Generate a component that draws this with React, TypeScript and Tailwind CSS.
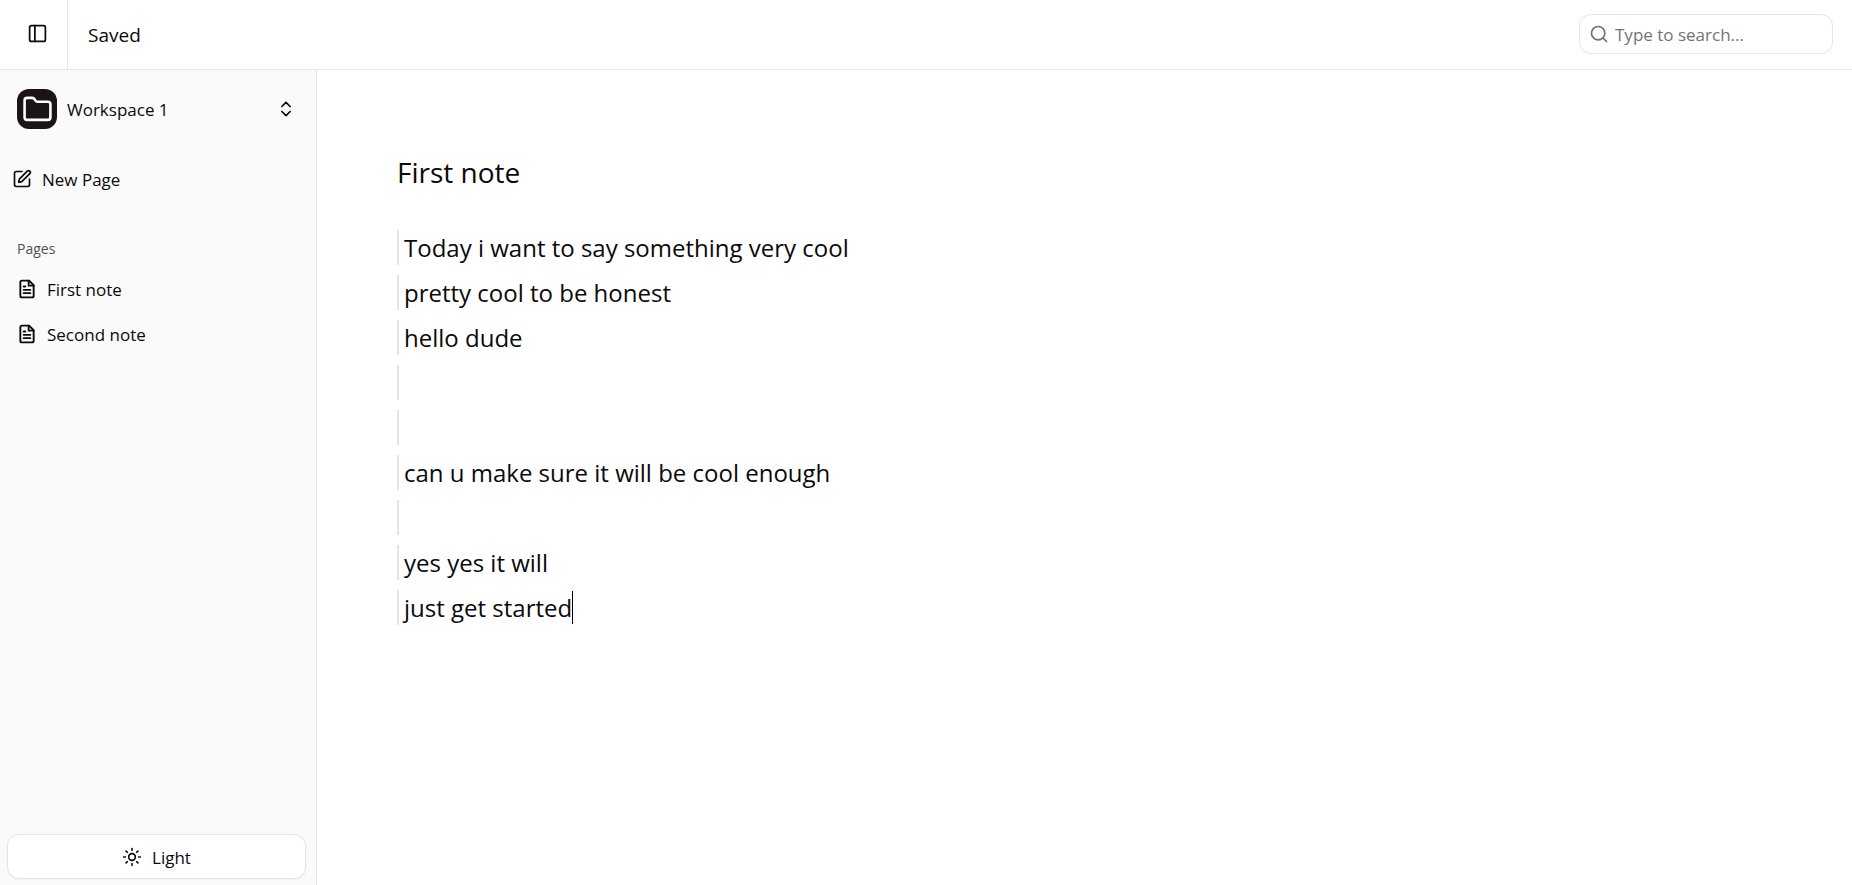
import { useState } from "react";
import { ChevronsUpDown, Folder, PanelLeft, Search, SquarePen, Sun } from "lucide-react";

const pages = ["First note", "Second note"];

const initialLines = [
  "Today i want to say something very cool",
  "pretty cool to be honest",
  "hello dude",
  "",
  "",
  "can u make sure it will be cool enough",
  "",
  "yes yes it will",
  "just get started",
];

function PageIcon() {
  return (
    <svg
      aria-hidden
      viewBox="0 0 24 24"
      fill="none"
      stroke="currentColor"
      strokeWidth="2.25"
      strokeLinecap="round"
      strokeLinejoin="round"
      className="size-5 shrink-0"
    >
      <path d="M14.5 2H6a2 2 0 0 0-2 2v16a2 2 0 0 0 2 2h12a2 2 0 0 0 2-2V7.5L14.5 2z" />
      <path d="M14 2v6h6" />
      <path d="M16 13H8" />
      <path d="M16 17H8" />
      <path d="M10 9H8" />
    </svg>
  );
}

function Header({ onToggle }: { onToggle: () => void }) {
  return (
    <header className="flex h-[70px] shrink-0 items-center border-b border-[#e4e4e4] bg-white">
      <div className="flex h-full w-[68px] items-center justify-center border-r border-[#e4e4e4]">
        <button type="button" aria-label="Toggle sidebar" onClick={onToggle} className="mb-0.5 ml-2">
          <PanelLeft size={21} />
        </button>
      </div>
      <p className="ml-5 pt-0.5 text-[19px]">Saved</p>
      <label className="mr-[19px] mb-[2px] ml-auto flex h-10 w-[254px] items-center gap-1.5 rounded-xl border border-[#e4e4e4] px-[9px]">
        <Search size={20} className="shrink-0 text-[#737373]" />
        <input
          type="text"
          aria-label="Search"
          placeholder="Type to search..."
          className="w-full min-w-0 bg-transparent pt-0.5 text-[17px] outline-none placeholder:text-[#737373]"
        />
      </label>
    </header>
  );
}

function Sidebar() {
  return (
    <aside className="flex w-[317px] shrink-0 flex-col border-r border-[#e4e4e4] bg-[#fafafa]">
      <button type="button" className="mt-[19px] flex h-10 items-center pr-5 pl-[17px] text-left">
        <span className="flex size-10 items-center justify-center rounded-xl bg-[#1c1414] text-white">
          <Folder size={31} />
        </span>
        <span className="ml-2.5 pt-0.5 text-[17px]">Workspace 1</span>
        <ChevronsUpDown size={20} className="ml-auto" />
      </button>

      <button type="button" className="mt-9 flex h-7 items-center gap-2.5 px-3 text-[17px]">
        <SquarePen size={20} />
        <span className="pt-0.5">New Page</span>
      </button>

      <h2 className="mt-[46px] ml-[17px] text-sm leading-5 text-[#525252]">Pages</h2>
      <nav className="mt-[7px] flex flex-col">
        {pages.map((page) => (
          <a key={page} href="#" className="flex h-[45px] items-center gap-2.5 px-[17px] text-[17px]">
            <PageIcon />
            <span className="pt-0.5">{page}</span>
          </a>
        ))}
      </nav>

      <button
        type="button"
        className="mx-[7px] mt-auto mb-[6px] flex h-[45px] w-[299px] items-center justify-center gap-2.5 rounded-xl border border-[#e4e4e4] bg-white text-[17px] shadow-xs"
      >
        <Sun size={20} />
        <span className="pt-0.5">Light</span>
      </button>
    </aside>
  );
}

export default function App() {
  const [open, setOpen] = useState(true);

  return (
    <div className="flex h-screen flex-col bg-white font-['Segoe_UI','Open_Sans',sans-serif] text-[#0a0a0a]">
      <Header onToggle={() => setOpen(!open)} />
      <div className="flex min-h-0 flex-1">
        {open && <Sidebar />}
        <main className="flex-1 overflow-auto px-20 pt-20">
          <h1 className="text-[28px] leading-[44px]">First note</h1>
          <div className="mt-9 flex flex-col gap-2.5">
            {initialLines.map((line, i) => (
              <p key={i} className="flex h-[35px] items-center border-l-2 border-[#e4e4e4] pl-[5px] text-2xl">
                {line}
                {i === initialLines.length - 1 && <span className="h-[33px] w-px bg-black" />}
              </p>
            ))}
          </div>
        </main>
      </div>
    </div>
  );
}
